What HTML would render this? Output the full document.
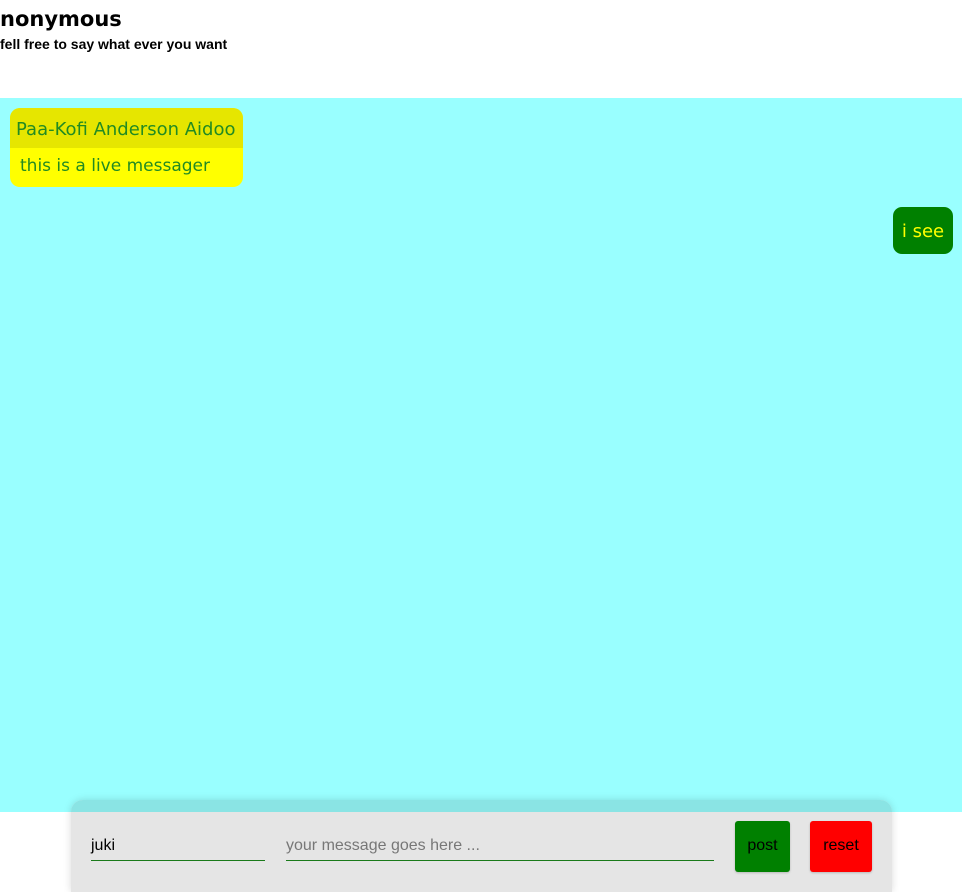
<!DOCTYPE html>
<html><head><style>
body{margin:0;width:962px;height:892px;position:relative;overflow:hidden;background:#fff;font-family:"DejaVu Sans","Liberation Sans",sans-serif}
h1{position:absolute;left:0;top:5px;margin:0;font-size:21px;font-weight:bold;line-height:28px}
.sub{position:absolute;left:0;top:36px;font-family:"Liberation Sans",sans-serif;font-size:14px;font-weight:bold}
.chat{position:absolute;left:0;top:98px;width:962px;height:714px;background:#99ffff}
.b1{position:absolute;left:10px;top:10px;width:233px;height:79px;border-radius:10px;overflow:hidden;background:#ffff00;color:#228b22;font-size:18px}
.b1 .h{height:40px;background:#e6e600;line-height:43px;padding-left:6px}
.b1 .m{line-height:36px;padding-left:10px;font-size:17px}
.b2{position:absolute;left:893px;top:109px;width:60px;height:47px;border-radius:9px;background:#008000;color:#ffff00;font-size:18px;line-height:50px;text-align:center}
.panel{position:absolute;left:71px;top:800px;width:821px;height:92px;background:#e5e5e5;border-radius:12px 12px 0 0;box-shadow:0 0 8px rgba(0,0,0,.15)}
.panel .ov{position:absolute;left:0;top:0;width:821px;height:12px;background:#8ae4e4;border-radius:12px 12px 0 0}
.in{position:absolute;top:32px;height:28px;border-bottom:1px solid #1a7a1a;font-family:"Liberation Sans",sans-serif;font-size:16px;line-height:28px}
.btn{position:absolute;top:21px;height:51px;border-radius:3px;font-family:"Liberation Sans",sans-serif;font-size:16px;line-height:49px;text-align:center;box-shadow:0 1px 2px rgba(0,0,0,.2)}
</style></head><body>
<h1>nonymous</h1>
<div class="sub">fell free to say what ever you want</div>
<div class="chat">
<div class="b1"><div class="h">Paa-Kofi Anderson Aidoo</div><div class="m">this is a live messager</div></div>
<div class="b2">i see</div>
</div>
<div class="panel"><div class="ov"></div>
<div class="in" style="left:20px;width:174px;color:#000">juki</div>
<div class="in" style="left:215px;width:428px;color:#777">your message goes here ...</div>
<div class="btn" style="left:664px;width:55px;background:#008000">post</div>
<div class="btn" style="left:739px;width:62px;background:#ff0000">reset</div>
</div>
</body></html>
